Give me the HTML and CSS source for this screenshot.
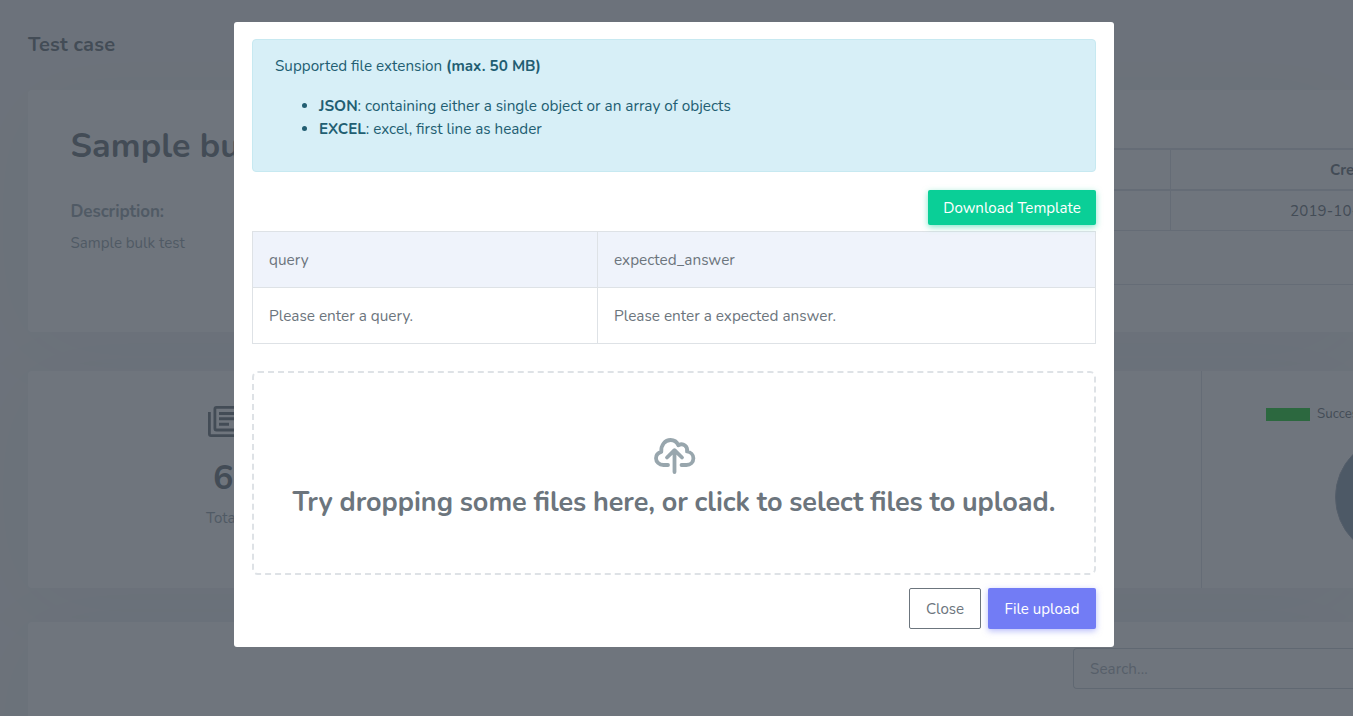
FILE: index.html
```html
<!DOCTYPE html>
<html lang="en">
<head>
<meta charset="utf-8">
<title>Test case</title>
<link rel="stylesheet" href="styles.css">
</head>
<body>
<main class="page">
  <h4 class="page-title">Test case</h4>
  <section class="card summary">
    <div class="about">
      <h2 class="name">Sample bulk test</h2>
      <h5 class="label">Description:</h5>
      <p class="muted description">Sample bulk test</p>
    </div>
    <div class="details">
      <table class="info">
        <tr><th></th><th class="created">Created</th></tr>
        <tr><td></td><td class="date">2019-10-21</td></tr>
      </table>
      <hr class="rule">
    </div>
  </section>
  <section class="card stats">
    <div class="stat">
      <svg class="stat-icon" viewBox="0 0 34 31" fill="none" stroke="currentColor"><rect x="6.900" y="1.400" width="25" height="22.600" rx="1.500" stroke-width="2.800"/><path d="M1.400 6v22a1.600 1.600 0 0 0 1.600 1.600h24" stroke-width="2.800"/><path d="M11 7.500h16M11 12.800h16M11 18.300h10" stroke-width="2.900"/></svg>
      <div class="count">60</div>
      <div class="muted total">Total cases</div>
    </div>
    <div class="chart">
      <div class="legend"><i class="swatch"></i><span>Success</span></div>
      <svg class="pie" viewBox="0 0 122 122"><circle cx="61" cy="61" r="60.500" fill="#8ca0b1" stroke="#a5b0bd"/></svg>
    </div>
  </section>
  <section class="card results"><div class="search">Search...</div></section>
</main>

<div class="backdrop">
  <div class="modal" role="dialog">
    <div class="alert">
      <p>Supported file extension <b>(max. 50 MB)</b></p>
      <ul class="formats">
        <li class="json"><b>JSON</b>: containing either a single object or an array of objects</li>
        <li><b>EXCEL</b>: excel, first line as header</li>
      </ul>
    </div>
    <div class="template-row"><button class="btn success">Download Template</button></div>
    <table class="sample">
      <tr class="head"><td>query</td><td>expected_answer</td></tr>
      <tr><td>Please enter a query.</td><td>Please enter a expected answer.</td></tr>
    </table>
    <div class="dropzone">
      <svg class="cloud" viewBox="0 0 42 36" fill="none" stroke="currentColor" stroke-width="3.800" stroke-linecap="round" stroke-linejoin="round"><path d="M14 27H9.500C5 27 2 23.800 2 20.300c0-3.400 2.200-5.700 5.300-6.500C6.800 7 11 2 16.500 2c3.700 0 6.400 2 7.800 5.200C29.500 4.500 34 8.500 33 13.500c3.600.6 6.400 3.100 6.400 6.700 0 4-3 6.800-7 6.800H27.500"/><path d="M20.500 34V12.500M13 19.500l7.500-7.300 7.500 7.300"/></svg>
      <h3 class="prompt">Try dropping some files here, or click to select files to upload.</h3>
    </div>
    <div class="actions"><button class="btn outline">Close</button><button class="btn primary">File upload</button></div>
  </div>
</div>
</body>
</html>
```
FILE: styles.css
```css
* { box-sizing: border-box; }
html, body { height: 100%; }
body, button { font-family: Nunito, Lato, "Open Sans", sans-serif; }
body {
  margin: 0;
  overflow: hidden;
  background: #f5f6f8;
  color: #6c757d;
  font-size: 15.100px;
  line-height: 23px;
}
h2, h3, h4, h5, p, ul { margin: 0; }
b { font-weight: 700; }

.page { width: 100%; height: 716px; overflow: hidden; padding-left: 28px; }
.page-title { height: 90px; padding-top: 33px; font-size: 20px; line-height: 24px; letter-spacing: .2px; }
.card {
  display: flex;
  background: #fff;
  border-radius: 4px 0 0 4px;
  box-shadow: 0 12px 96px rgba(56, 65, 74, .04);
}
.muted { color: #98a6ad; }

.summary { height: 242px; margin-bottom: 39px; padding: 38px 0 0 42.500px; }
.about { width: 700.500px; }
.name { font-size: 34px; line-height: 37px; letter-spacing: .1px; }
.label { margin: 35px 0 9px; color: #98a6ad; font-size: 17px; line-height: 23px; letter-spacing: -.1px; }
.details { flex: 1; padding-top: 20px; }
.info { width: 100%; table-layout: fixed; border-collapse: separate; border-spacing: 0; text-align: left; }
.info th { height: 43px; border-top: 2px solid #dee2e6; border-bottom: 2px solid #dee2e6; }
.info td { height: 40px; border-bottom: 1px solid #dee2e6; }
.info th, .info td { padding: 1px 0 0; border-left: 1px solid #dee2e6; overflow: hidden; white-space: nowrap; }
.info th:first-child { width: 399px; }
.info .created { padding-left: 159px; }
.info .date { padding-left: 119px; letter-spacing: .15px; }
.rule { margin: 53px 0 0; border: 0; border-top: 1px solid #dee2e6; }

.stats { height: 217px; margin-bottom: 34px; }
.stat { width: 1174px; padding: 35px 0 0 178px; border-right: 1px solid #dee2e6; }
.stat-icon { display: block; width: 34px; height: 31px; margin-left: 2px; }
.count { margin: 21px 0 9px 7px; font-size: 34px; font-weight: 700; line-height: 40px; }
.chart { flex: 1; overflow: hidden; padding: 36px 0 0 64px; }
.legend { display: flex; gap: 7px; align-items: center; height: 14px; font-size: 13.300px; line-height: 14px; }
.swatch { flex: none; width: 44px; height: 13px; background: #1ed22f; }
.pie { display: block; width: 122px; height: 122px; margin: 15px 0 0 69px; }

.results { height: 300px; padding: 26px 0 0 1045px; }
.search {
  flex: 1;
  height: 41px;
  padding: 9px 16px;
  border: 1px solid #ced4da;
  border-right: 0;
  border-radius: 4px 0 0 4px;
  color: #adb5bd;
  letter-spacing: .15px;
}

.backdrop {
  position: absolute;
  inset: 0;
  padding: 22px 239px 0 234px;
  background: rgba(50, 58, 70, .7);
}
.modal {
  width: 880px;
  height: 625px;
  padding: 17px 18px 18px;
  background: #fff;
  border-radius: 3px;
}
.alert {
  height: 133px;
  padding: 15px 22px;
  background: #d7eff7;
  border: 1px solid #c7e9f1;
  border-radius: 4px;
  color: #225e72;
  font-size: 15.230px;
}
.formats { margin-top: 17px; padding-left: 44px; }
.json { font-size: 15.330px; }
.template-row { display: flex; justify-content: flex-end; margin: 18px 0 6px; }
.btn { padding: 1px 0 0; border: 0; border-radius: 2px; font-size: 15.100px; line-height: 23px; }
.success {
  width: 168px;
  height: 35px;
  background: #0acf97;
  color: #fff;
  box-shadow: 0 2px 6px rgba(10, 207, 151, .5);
}
.sample { width: 844px; height: 113px; table-layout: fixed; border-collapse: collapse; font-size: 15.330px; }
.sample td { height: 56px; padding: 2px 16px 0; border: 1px solid #dee2e6; }
.sample td:first-child { width: 345px; }
.head { background: #eff3fb; }
.dropzone {
  display: flex;
  flex-direction: column;
  align-items: center;
  height: 204px;
  margin-top: 27px;
  padding-top: 65px;
  border: 2px dashed #dee2e6;
  border-radius: 6px;
}
.cloud { width: 42px; height: 36px; margin-left: 1px; color: #98a6ad; }
.prompt { margin-top: 13px; font-size: 27px; line-height: 32px; word-spacing: -.62px; white-space: nowrap; }
.actions { display: flex; justify-content: flex-end; gap: 7px; margin-top: 13px; }
.outline { width: 72px; height: 41px; border: 1px solid #6c757d; background: #fff; color: #6c757d; }
.primary {
  width: 108px;
  height: 41px;
  background: #727cf5;
  color: #fff;
  box-shadow: 0 2px 6px rgba(114, 124, 245, .5);
}
```
